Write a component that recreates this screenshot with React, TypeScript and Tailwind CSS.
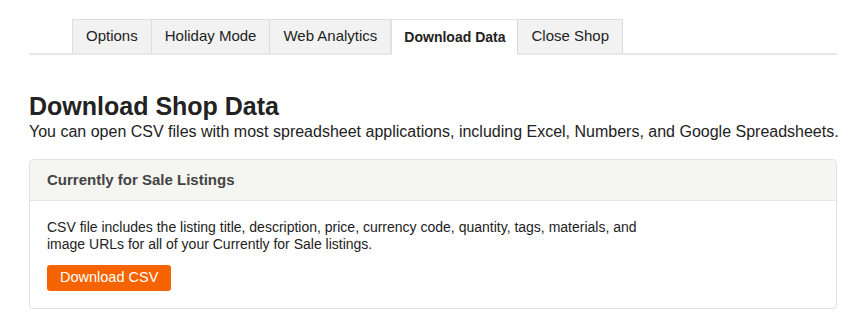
export default function App() {
  const tabs = ["Options", "Holiday Mode", "Web Analytics", "Download Data", "Close Shop"];
  const active = "Download Data";

  return (
    <div
      className="min-h-[325px] w-full bg-white pt-[19px] pr-[23px] pl-[29px] text-[#222222]"
      style={{ fontFamily: '"Liberation Sans", Arial, sans-serif' }}
    >
      {/* tabs */}
      <div className="flex border-b-2 border-[#e8e8e8] pl-[43px]">
        {tabs.map((t) => (
          <div
            key={t}
            className={
              t === active
                ? "-mb-[2px] flex h-[36px] items-center border border-b-0 border-[#e4e4e4] bg-white px-[12px] text-[14px] font-bold text-[#222222]"
                : "-ml-px flex h-[34px] items-center border border-b-0 border-[#dddddd] bg-[#f2f2f2] px-[13px] text-[15px] text-[#222222] first:ml-0"
            }
          >
            {t}
          </div>
        ))}
      </div>

      <h1 className="mt-[36px] text-[25px] leading-[30px] font-bold text-[#222222]">Download Shop Data</h1>
      <p className="mt-[1px] whitespace-nowrap text-[16px] leading-[20px] text-[#222222]">
        You can open CSV files with most spreadsheet applications, including Excel, Numbers, and Google Spreadsheets.
      </p>

      <div className="mt-[17px] overflow-hidden rounded-[4px] border border-[#e2e2e2]">
        <div className="flex h-[41px] items-center border-b border-[#e6e6e6] bg-[#f5f5f1] px-[17px] text-[15px] font-bold text-[#444444]">
          Currently for Sale Listings
        </div>
        <div className="px-[17px] pt-[18px] pb-[17px]">
          <p className="max-w-[600px] text-[14px] leading-[17px] text-[#222222]">
            CSV file includes the listing title, description, price, currency code, quantity, tags, materials, and
            image URLs for all of your Currently for Sale listings.
          </p>
          <button className="mt-[12px] h-[26px] rounded-[3px] bg-[#f56400] px-[13px] text-[14.5px] text-white">
            Download CSV
          </button>
        </div>
      </div>
    </div>
  );
}
